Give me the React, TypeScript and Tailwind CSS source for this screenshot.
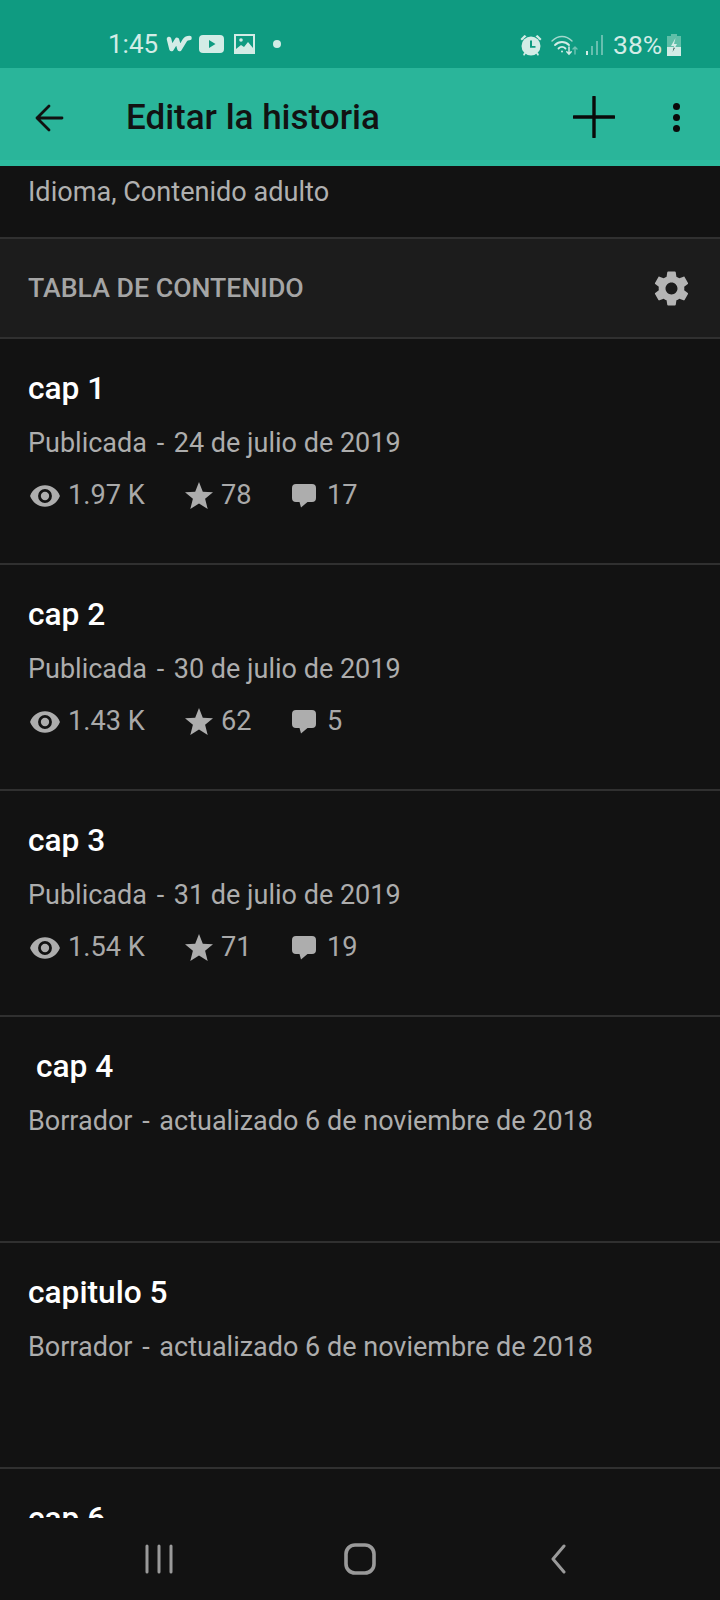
const chapters = [
  { title: "cap 1", state: "Publicada", date: "24 de julio de 2019", views: "1.97 K", stars: "78", comments: "17" },
  { title: "cap 2", state: "Publicada", date: "30 de julio de 2019", views: "1.43 K", stars: "62", comments: "5" },
  { title: "cap 3", state: "Publicada", date: "31 de julio de 2019", views: "1.54 K", stars: "71", comments: "19" },
  { title: "cap 4", state: "Borrador", date: "actualizado 6 de noviembre de 2018", indent: true },
  { title: "capitulo 5", state: "Borrador", date: "actualizado 6 de noviembre de 2018" },
  { title: "cap 6" },
];

const StatusIcons = () => (
  <div className="flex items-center text-[#d3ece6]">
    {/* alarm */}
    <svg width="24" height="24" viewBox="0 0 24 24" className="ml-[519px]" fill="currentColor">
      <circle cx="12" cy="13" r="9.500" />
      <path d="M1.500 6l4-4 2 1.200-4.600 4.400zM22.500 6l-4-4-2 1.200 4.600 4.400z" />
      <path d="M11 7.500h2v5.500h3.500v1.800H11z" fill="#0f9b81" />
      <path d="M4 21l2-1.500 1 1-2 2.500zM20 21l-2-1.500-1 1 2 2.500z" />
    </svg>
    {/* wifi */}
    <svg width="28" height="24" viewBox="0 0 28 24" className="ml-[7px]" fill="none" stroke="currentColor" strokeLinecap="round">
      <path d="M2 8c6-6 14-6 20 0" strokeWidth="1.4" opacity="0.75" />
      <path d="M5 12c4-4 10-4 14 0" strokeWidth="1.8" />
      <path d="M8.500 15.500c2-2 5-2 7 0" strokeWidth="1.8" />
      <circle cx="12" cy="18.500" r="1" fill="currentColor" stroke="none" />
      <path d="M19 14v7M16.800 18.800l2.200 2.400 2.200-2.400" strokeWidth="1.5" />
      <path d="M25 21v-7M23 16l2-2 2 2" strokeWidth="1.4" opacity="0.5" />
    </svg>
    {/* signal */}
    <svg width="20" height="22" viewBox="0 0 20 22" className="ml-[7px]" fill="currentColor">
      <rect x="1" y="17" width="2" height="4" />
      <rect x="6" y="12" width="2" height="9" opacity="0.45" />
      <rect x="11" y="7" width="2" height="14" opacity="0.45" />
      <rect x="16" y="1" width="2" height="20" opacity="0.45" />
    </svg>
    <span className="ml-[8px] text-[26.5px] leading-none font-normal">38%</span>
    {/* battery */}
    <svg width="14" height="22" viewBox="0 0 14 22" className="ml-[5px]">
      <rect x="4" y="0" width="6" height="2" fill="#5fbfa8" />
      <rect x="0" y="2" width="14" height="20" fill="#5fbfa8" />
      <rect x="0" y="13" width="14" height="9" fill="#d3ece6" />
      <path d="M8.500 4L4 12h3l-1.500 6L10 10H7z" fill="#d3ece6" />
      <path d="M7 13l-1.500 5 2-3.500z" fill="#10342c" />
    </svg>
  </div>
);

const StatusBar = () => (
  <div className="relative h-[68px] bg-[#0f9b81] flex items-center pt-[20px] text-[#d3ece6]">
    <div className="absolute left-[108px] top-[29px] flex items-center">
      <span className="text-[26px] leading-[30px]">1:45</span>
      {/* wattpad mark */}
      <svg width="26" height="18" viewBox="0 0 26 18" className="ml-[8px]" fill="none" stroke="currentColor" strokeWidth="4.600" strokeLinecap="round" strokeLinejoin="round">
        <path d="M3 4l2.500 10L11 5l2.500 9L19 5c1-1.500 2.500-2 4.500-2" />
      </svg>
      {/* youtube */}
      <svg width="25" height="18" viewBox="0 0 25 18" className="ml-[7px]">
        <rect width="25" height="18" rx="4" fill="currentColor" />
        <path d="M10 5l6.500 4-6.500 4z" fill="#0f9b81" />
      </svg>
      {/* gallery */}
      <svg width="21" height="20" viewBox="0 0 21 20" className="ml-[10px]">
        <rect width="21" height="20" fill="currentColor" />
        <rect x="2" y="2" width="17" height="13" fill="#0f9b81" />
        <circle cx="7" cy="6" r="1.800" fill="currentColor" />
        <path d="M2 15l5-4 3 2 4-5 5 6v4H2z" fill="currentColor" />
      </svg>
      <span className="ml-[18px] size-[8px] rounded-full bg-[#d3ece6]" />
    </div>
    <div className="absolute left-0 top-[32px]">
      <StatusIcons />
    </div>
  </div>
);

const Toolbar = () => (
  <div className="h-[98px] bg-[#2ab59a] border-b-[6px] border-[#2cbb9f] pt-[6px] flex items-center">
    <svg width="30" height="28" viewBox="0 0 30 28" className="ml-[35px] mt-[1px]" fill="none" stroke="#111" strokeWidth="2.8" strokeLinecap="round" strokeLinejoin="round">
      <path d="M2 14h25M14 2L2 14l12 12" />
    </svg>
    <h1 className="ml-[61px] text-[35px] font-medium text-[#121212] leading-none">Editar la historia</h1>
    <svg width="42" height="42" viewBox="0 0 42 42" className="ml-[193px]" fill="none" stroke="#0a0a0a" strokeWidth="3.4" strokeLinecap="round">
      <path d="M21 1v40M1 21h40" />
    </svg>
    <div className="ml-[58px] flex flex-col gap-[4px]">
      <span className="size-[7px] rounded-full bg-[#0a0a0a]" />
      <span className="size-[7px] rounded-full bg-[#0a0a0a]" />
      <span className="size-[7px] rounded-full bg-[#0a0a0a]" />
    </div>
  </div>
);

const Stat = ({ icon, value, className }: { icon: React.ReactNode; value: string; className: string }) => (
  <div className={`flex items-center ${className}`}>
    {icon}
    <span className="text-[27.2px] leading-none text-[#a9a9a9]">{value}</span>
  </div>
);

const EyeIcon = (
  <svg width="32" height="24" viewBox="0 0 30 22" className="mr-[7px]" fill="#adadad">
    <path fillRule="evenodd" d="M15 1C8.600 1 3.200 5 1 11c2.200 6 7.600 10 14 10s11.800-4 14-10C26.800 5 21.400 1 15 1zm0 16.500a6.500 6.500 0 1 1 0-13 6.500 6.500 0 0 1 0 13z" />
    <circle cx="15" cy="11" r="3.900" />
  </svg>
);

const StarIcon = (
  <svg width="28" height="27" viewBox="0 0 28 27" className="mr-[8px]" fill="#adadad">
    <path d="M14 0l3.800 9.700 10.200.6-7.900 6.500 2.600 10.200L14 21.400 5.300 27l2.600-10.200L0 10.300l10.200-.6z" />
  </svg>
);

const CommentIcon = (
  <svg width="26" height="25" viewBox="0 0 26 25" className="mr-[10px]" fill="#adadad">
    <path d="M5 1h16a4 4 0 0 1 4 4v10a4 4 0 0 1-4 4h-4.500L10 24.500 8.500 19H5a4 4 0 0 1-4-4V5a4 4 0 0 1 4-4z" />
  </svg>
);

const ChapterRow = ({ chapter }: { chapter: (typeof chapters)[number] }) => (
  <div className="h-[226px] border-b-2 border-[#303030] px-[28px] pt-[32px] shrink-0">
    <div className={`text-[31.7px] leading-[36px] font-medium text-white ${chapter.indent ? "pl-[8px]" : ""}`}>
      {chapter.title}
    </div>
    {chapter.state && (
      <div className="mt-[18px] text-[27px] leading-[36px] text-[#adadad]">
        {chapter.state} <span className="mx-[3px]">-</span> {chapter.date}
      </div>
    )}
    {chapter.views && (
      <div className="mt-[21px] flex items-center pl-[1px]">
        <Stat icon={EyeIcon} value={chapter.views} className="w-[156px]" />
        <Stat icon={StarIcon} value={chapter.stars ?? ""} className="w-[106px]" />
        <Stat icon={CommentIcon} value={chapter.comments ?? ""} className="" />
      </div>
    )}
  </div>
);

const NavBar = () => (
  <div className="h-[82px] bg-[#121212] shrink-0 flex items-start pt-[26px]">
    <svg width="28" height="30" viewBox="0 0 28 30" className="ml-[145px]" fill="none" stroke="#9a9a9a" strokeWidth="3" strokeLinecap="round">
      <path d="M2 2v26M14 2v26M26 2v26" />
    </svg>
    <svg width="32" height="32" viewBox="0 0 32 32" className="ml-[171px] -mt-[1px]" fill="none" stroke="#9a9a9a" strokeWidth="3.600">
      <rect x="2" y="2" width="28" height="28" rx="9" />
    </svg>
    <svg width="18" height="30" viewBox="0 0 18 30" className="ml-[174px]" fill="none" stroke="#9a9a9a" strokeWidth="3" strokeLinecap="round" strokeLinejoin="round">
      <path d="M14 2L3 15l11 13" />
    </svg>
  </div>
);

export default function App() {
  return (
    <div className="w-[720px] h-[1600px] flex flex-col bg-[#121212] overflow-hidden font-['Roboto',sans-serif]">
      <StatusBar />
      <Toolbar />
      <div className="flex-1 overflow-hidden flex flex-col">
        <div className="h-[71px] shrink-0 px-[28px] pt-[8px] text-[27.1px] leading-[36px] text-[#b0b0b0]">
          Idioma, Contenido adulto
        </div>
        <div className="h-[102px] shrink-0 bg-[#1c1c1c] border-y-2 border-[#303030] px-[28px] flex items-center justify-between">
          <span className="text-[26.7px] font-medium text-[#a5a5a5]">TABLA DE CONTENIDO</span>
          <svg width="41" height="41" viewBox="0 0 24 24" fill="#b5b5b5">
            <path d="M19.430 12.980c.040-.320.070-.640.070-.980s-.030-.660-.070-.980l2.110-1.650c.190-.150.240-.420.120-.640l-2-3.460c-.120-.220-.390-.300-.610-.220l-2.490 1c-.520-.400-1.080-.730-1.690-.980l-.380-2.650C14.460 2.180 14.250 2 14 2h-4c-.250 0-.460.180-.490.420l-.380 2.650c-.610.250-1.170.590-1.690.980l-2.490-1c-.230-.090-.490 0-.610.220l-2 3.460c-.130.220-.070.490.120.640l2.110 1.650c-.040.320-.070.650-.070.980s.030.660.070.980l-2.110 1.650c-.190.150-.240.420-.120.640l2 3.460c.120.220.390.300.610.220l2.490-1c.520.400 1.080.730 1.690.980l.380 2.650c.030.240.240.420.490.420h4c.250 0 .460-.180.490-.420l.380-2.650c.610-.250 1.170-.590 1.690-.980l2.490 1c.230.090.490 0 .610-.220l2-3.460c.120-.220.070-.490-.120-.640l-2.110-1.650zM12 15.500c-1.930 0-3.500-1.570-3.500-3.500s1.570-3.500 3.500-3.500 3.500 1.570 3.500 3.500-1.570 3.500-3.500 3.500z" />
          </svg>
        </div>
        {chapters.map((chapter) => (
          <ChapterRow key={chapter.title} chapter={chapter} />
        ))}
      </div>
      <NavBar />
    </div>
  );
}
